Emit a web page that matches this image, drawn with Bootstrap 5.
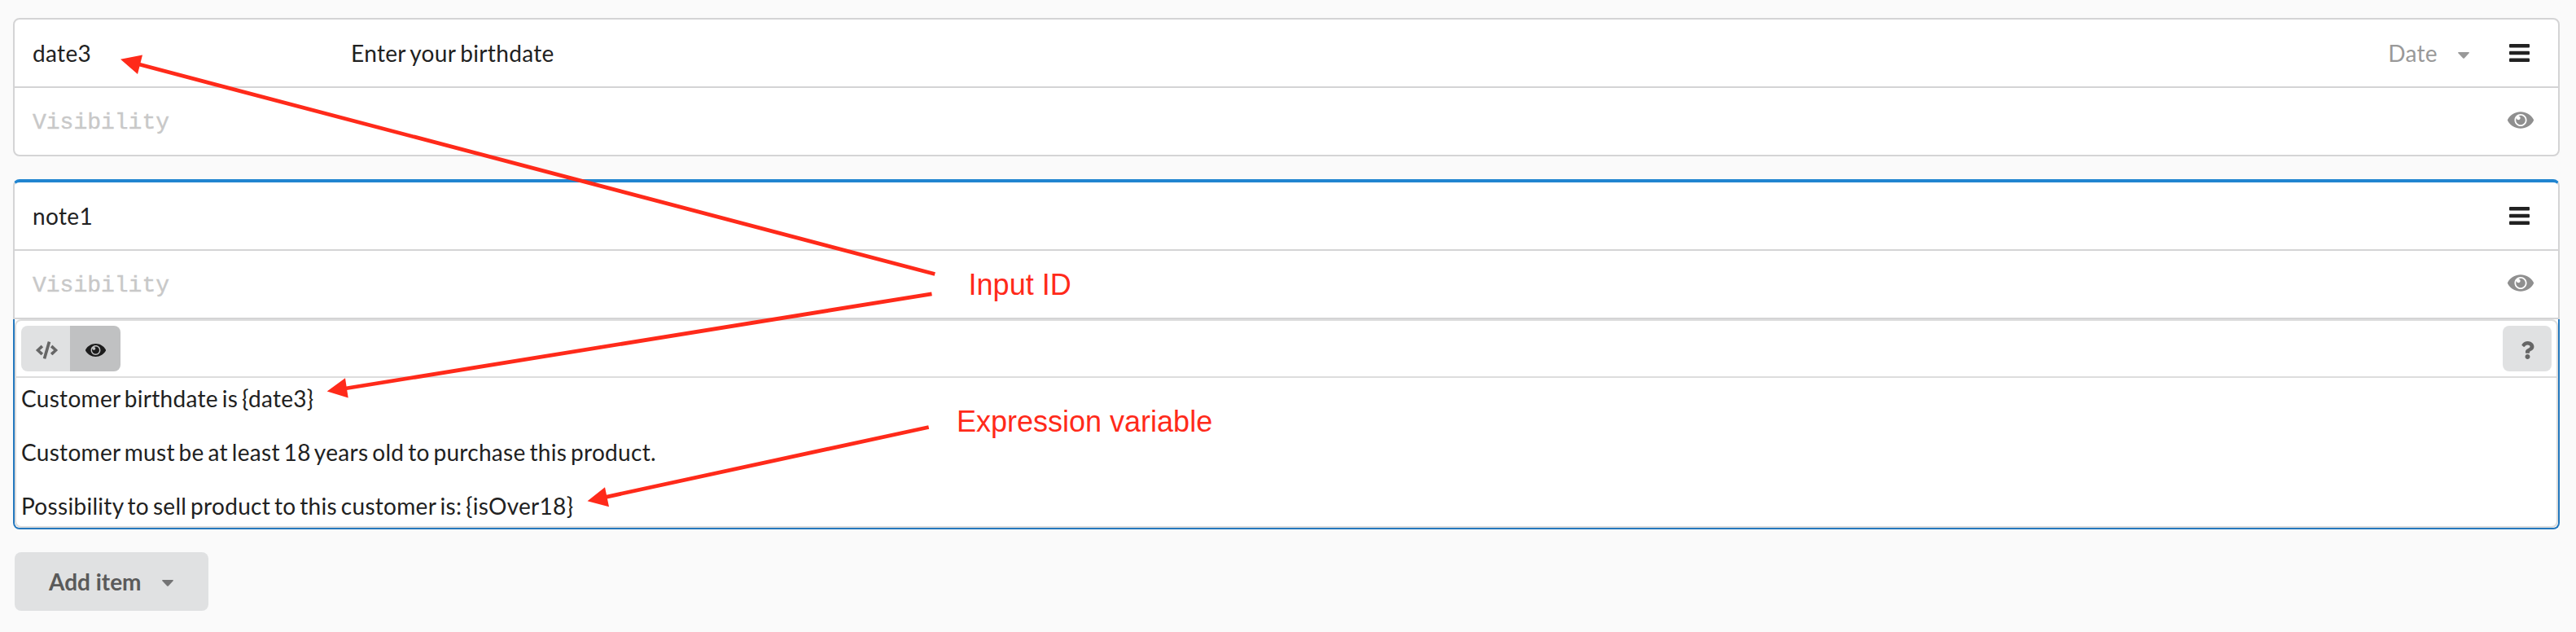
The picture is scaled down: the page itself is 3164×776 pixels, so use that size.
<!DOCTYPE html>
<html lang="en">
<head>
<meta charset="utf-8">
<title>Form editor</title>
<link href="https://cdn.jsdelivr.net/npm/bootstrap@5.3.0/dist/css/bootstrap.min.css" rel="stylesheet">
<script src="https://cdn.jsdelivr.net/npm/bootstrap@5.3.0/dist/js/bootstrap.bundle.min.js"></script>
<style>
body{background:#fafafa;color:#212121;font-family:Lato,sans-serif;font-size:28px;line-height:40px;overflow:hidden}
svg{display:block;fill:currentColor;flex:none}
.page{height:776px;padding:22px 20px 0 16px}
.item-card{border:2px solid #d4d4d5;border-radius:8px;background:#fff}
.item-row{height:82px;padding:0 35px 0 22px;letter-spacing:.35px;word-spacing:-2px}
.item-row+.item-row{border-top:2px solid #d4d4d5;height:84px;padding-right:30px;letter-spacing:0}
.col-id{width:391px}
.menu-ic{width:25px;height:22px;margin-left:49px}
.type-sel{color:#999;gap:25px}
.type-sel svg{margin-top:6px}
.hint{font-family:"Liberation Mono",monospace;color:#c8c8c8;padding-top:3px;-webkit-text-stroke:.4px #c8c8c8}
.eye-ic{width:32px;height:21px;color:#8f8f8f;margin-bottom:3px}
.item-active{margin-top:28px;border-top:4px solid #2185d0;border-radius:8px 8px 0 0}
.note-editor{border:2px solid #2478be;border-top:0;border-radius:0 0 8px 8px;background:#fff}
.note-inner{border:2px solid #ddd;border-radius:8px;height:256px}
.tools{height:70px;padding:6px 6px;border-bottom:2px solid #ddd}
.tool-btn{height:56px;border:0;border-radius:8px;background:#e0e1e2;color:#666;display:flex;align-items:center;justify-content:center;padding:3px 0 0;width:60px}
.tool-btn.is-on{background:#c0c1c2;color:#1c1c1c;width:62px}
.tool-btn.is-first{border-radius:8px 0 0 8px;padding-left:2px}
.tool-btn.is-last{border-radius:0 8px 8px 0}
.note-text{padding:5px 6px 0;letter-spacing:.3px;word-spacing:-2.6px}
.note-text p{margin:0 0 26px}
.add-btn{width:238px;height:72px;margin:28px 0 0 2px;border:0;border-radius:8px;background:#e0e1e2;color:#5a5a5a;font-weight:700;padding:0 42px;gap:25px}
.notes{left:0;top:0;color:#ff2a1a}
.notes text{font-family:"Liberation Sans",Arial,sans-serif;font-size:36px}
</style>
</head>
<body>
<svg width="0" height="0" class="position-absolute">
  <symbol id="eye" viewBox="0 72 576 368"><path d="M569.354 231.631C512.969 135.949 407.81 72 288 72 168.14 72 63.004 135.994 6.646 231.631a47.999 47.999 0 0 0 0 48.739C63.031 376.051 168.19 440 288 440c119.86 0 224.996-63.994 281.354-159.631a47.997 47.997 0 0 0 0-48.738zM288 392c-75.162 0-136-60.827-136-136 0-75.162 60.826-136 136-136 75.162 0 136 60.826 136 136 0 75.162-60.826 136-136 136zm104-136c0 57.438-46.562 104-104 104s-104-46.562-104-104c0-17.708 4.431-34.379 12.236-48.973l-.001.032c0 23.651 19.173 42.823 42.824 42.823s42.824-19.173 42.824-42.823c0-23.651-19.173-42.824-42.824-42.824l-.032.001C253.621 156.431 270.292 152 288 152c57.438 0 104 46.562 104 104z"/></symbol>
  <symbol id="bars" viewBox="0 0 25 22"><rect width="25" height="4.4" rx="1"/><rect y="8.8" width="25" height="4.4" rx="1"/><rect y="17.6" width="25" height="4.4" rx="1"/></symbol>
  <symbol id="caret" viewBox="0 0 14 8"><path d="M.8 0h12.4q1.1.4.4 1.3L7.8 7.5q-.8.7-1.6 0L.4 1.3Q-.3.4.8 0z"/></symbol>
</svg>
<main class="page position-relative">
  <section class="item-card">
    <div class="item-row d-flex align-items-center">
      <div class="col-id">date3</div>
      <div class="flex-grow-1">Enter your birthdate</div>
      <div class="type-sel d-flex align-items-center">Date<svg width="14" height="8"><use href="#caret"/></svg></div>
      <svg class="menu-ic"><use href="#bars"/></svg>
    </div>
    <div class="item-row d-flex align-items-center justify-content-between">
      <span class="hint">Visibility</span><svg class="eye-ic"><use href="#eye"/></svg>
    </div>
  </section>
  <section class="item-card item-active">
    <div class="item-row d-flex align-items-center justify-content-between">
      <div class="col-id">note1</div>
      <svg class="menu-ic"><use href="#bars"/></svg>
    </div>
    <div class="item-row d-flex align-items-center justify-content-between">
      <span class="hint">Visibility</span><svg class="eye-ic"><use href="#eye"/></svg>
    </div>
  </section>
  <section class="note-editor">
    <div class="note-inner">
      <div class="tools d-flex justify-content-between">
        <div class="d-flex">
          <button class="tool-btn is-first"><svg width="27" height="22" viewBox="0 0 640 512"><path d="M278.9 511.5l-61-17.7c-6.4-1.8-10-8.5-8.2-14.9L346.2 8.7c1.8-6.4 8.5-10 14.9-8.2l61 17.7c6.4 1.8 10 8.5 8.2 14.9L293.8 503.3c-1.9 6.4-8.5 10.1-14.9 8.2zm-114-112.2l43.5-46.4c4.6-4.9 4.3-12.7-.8-17.2L117 256l90.6-79.7c5.1-4.5 5.5-12.3.8-17.2l-43.5-46.4c-4.5-4.8-12.1-5.1-17-.5L3.8 247.2c-5.1 4.7-5.1 12.8 0 17.5l144.1 135.1c4.9 4.6 12.5 4.4 17-.5zm327.2.6l144.1-135.1c5.1-4.7 5.1-12.8 0-17.5L492.1 112.1c-4.8-4.5-12.4-4.3-17 .5L431.6 159c-4.6 4.9-4.3 12.7.8 17.2L523 256l-90.6 79.7c-5.1 4.5-5.5 12.3-.8 17.2l43.5 46.4c4.5 4.9 12.1 5.1 17 .6z"/></svg></button>
          <button class="tool-btn is-on is-last"><svg width="25" height="16"><use href="#eye"/></svg></button>
        </div>
        <button class="tool-btn"><svg width="17" height="22" viewBox="0 0 384 512"><path d="M202.021 0C122.202 0 70.503 32.703 29.914 91.026c-7.363 10.58-5.093 25.086 5.178 32.874l43.138 32.709c10.373 7.865 25.132 6.026 33.253-4.148 25.049-31.381 43.63-49.449 82.757-49.449 30.764 0 68.816 19.799 68.816 49.631 0 22.552-18.617 34.134-48.993 51.164-35.423 19.86-82.299 44.576-82.299 106.405V320c0 13.255 10.745 24 24 24h72.471c13.255 0 24-10.745 24-24v-5.773c0-42.86 125.268-44.645 125.268-160.627C377.504 66.256 286.902 0 202.021 0zM192 373.459c-38.196 0-69.271 31.075-69.271 69.271 0 38.195 31.075 69.27 69.271 69.27s69.271-31.075 69.271-69.271-31.075-69.27-69.271-69.27z"/></svg></button>
      </div>
      <div class="note-text">
        <p>Customer birthdate is {date3}</p>
        <p>Customer must be at least 18 years old to purchase this product.</p>
        <p>Possibility to sell product to this customer is: {isOver18}</p>
      </div>
    </div>
  </section>
  <button class="add-btn d-flex align-items-center">Add item<svg width="14" height="8" class="mt-1" opacity=".8"><use href="#caret"/></svg></button>

  <!-- Annotation arrows and labels over the form -->
  <svg class="notes position-absolute" width="3164" height="776" viewBox="0 0 3164 776">
    <g stroke="currentColor" stroke-width="4.8">
      <path d="M170 78.8L1148.3 336.5M424 477L1144.5 360.8M744 610.3L1140.7 524.5"/>
    </g>
    <path d="M148 72.7L175 67.5L169 91zM401.7 480.5L424 464.3L427.7 488.5zM721.5 615.2L743 598.3L748 622.2z"/>
    <text x="1189.6" y="361.5">Input ID</text>
    <text x="1175" y="530">Expression variable</text>
  </svg>
</main>
</body>
</html>
